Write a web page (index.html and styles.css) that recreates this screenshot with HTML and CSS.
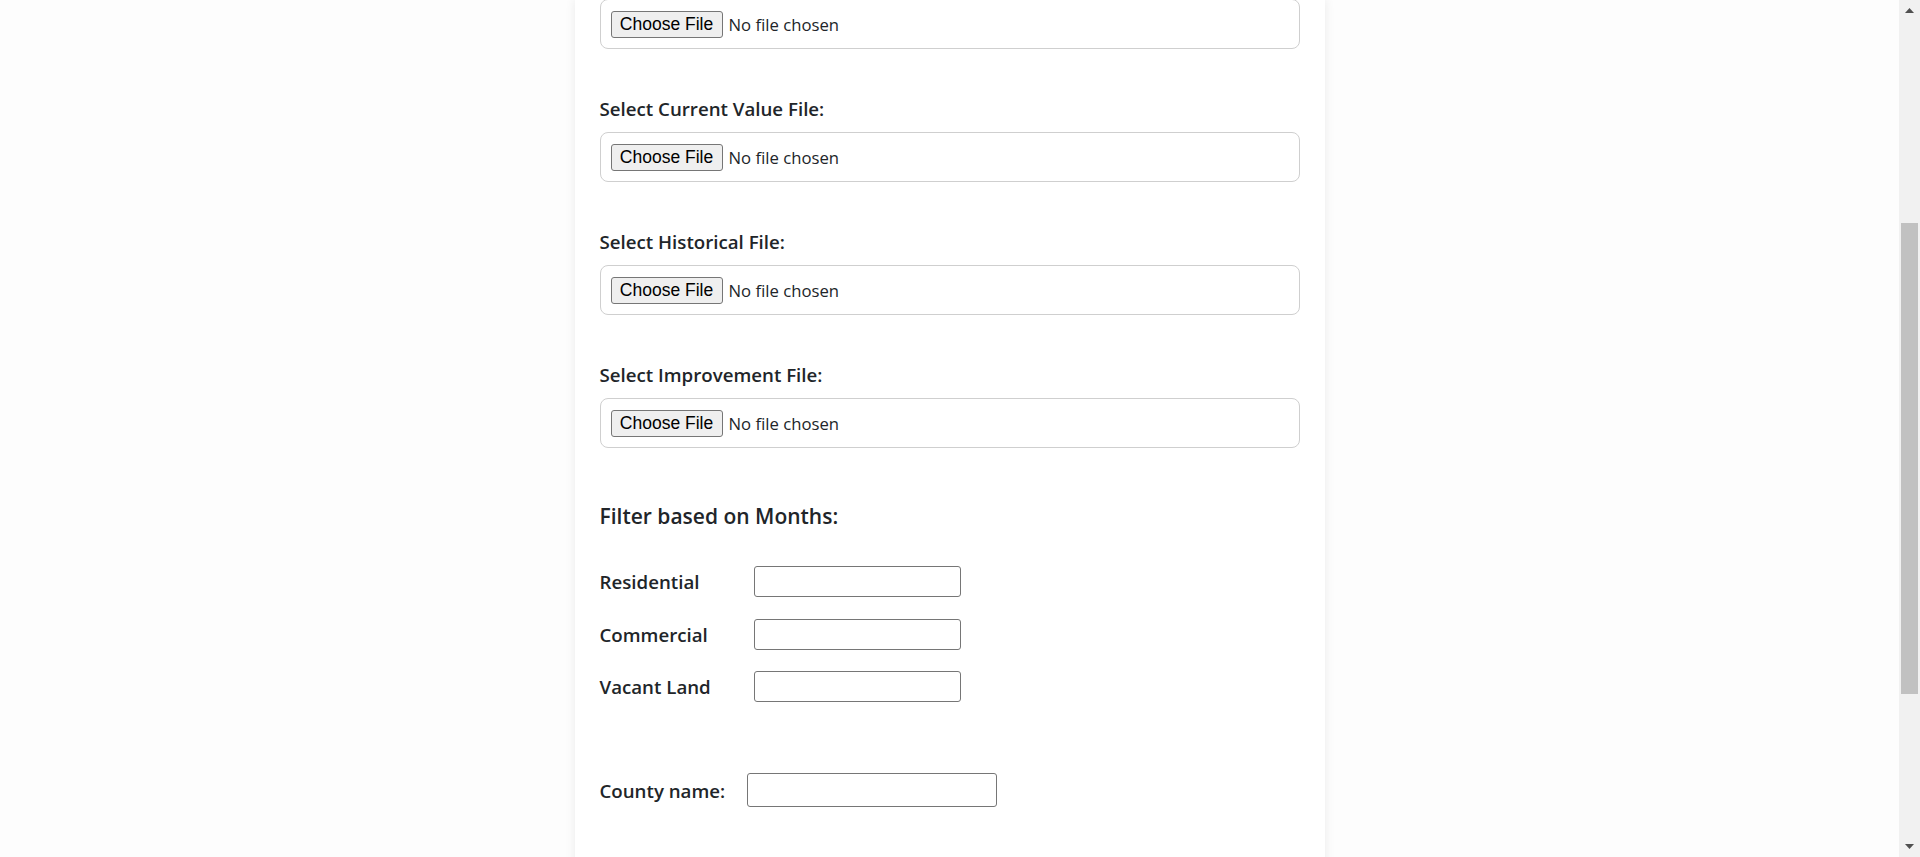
FILE: index.html
```html
<!DOCTYPE html>
<html lang="en">
<head>
<meta charset="utf-8">
<title>Upload Files</title>
<link rel="stylesheet" href="styles.css">
</head>
<body>
  <div class="viewport">
    <main class="card">
      <div class="upload-group first">
        <label class="file-box">
          <input type="file" class="file-native">
          <span class="file-btn">Choose File</span>
          <span class="file-name">No file chosen</span>
        </label>
      </div>

      <div class="upload-group">
        <span class="upload-label">Select Current Value File:</span>
        <label class="file-box">
          <input type="file" class="file-native">
          <span class="file-btn">Choose File</span>
          <span class="file-name">No file chosen</span>
        </label>
      </div>

      <div class="upload-group">
        <span class="upload-label">Select Historical File:</span>
        <label class="file-box">
          <input type="file" class="file-native">
          <span class="file-btn">Choose File</span>
          <span class="file-name">No file chosen</span>
        </label>
      </div>

      <div class="upload-group last">
        <span class="upload-label">Select Improvement File:</span>
        <label class="file-box">
          <input type="file" class="file-native">
          <span class="file-btn">Choose File</span>
          <span class="file-name">No file chosen</span>
        </label>
      </div>

      <h2 class="section-title">Filter based on Months:</h2>

      <div class="month-grid">
        <label class="row-label" for="res">Residential</label>
        <input class="text-input month-input" id="res" type="text">
        <label class="row-label" for="com">Commercial</label>
        <input class="text-input month-input" id="com" type="text">
        <label class="row-label" for="vac">Vacant Land</label>
        <input class="text-input month-input" id="vac" type="text">
      </div>

      <div class="county-row">
        <label class="row-label county-label" for="county">County name:</label>
        <input class="text-input county-input" id="county" type="text">
      </div>
    </main>
  </div>

  <div class="scrollbar" aria-hidden="true">
    <div class="sb-arrow">
      <svg width="9" height="5" viewBox="0 0 9 5"><path d="M4.5 0 L9 5 L0 5 Z" fill="#505050"/></svg>
    </div>
    <div class="sb-track">
      <div class="sb-thumb"></div>
    </div>
    <div class="sb-arrow">
      <svg width="9" height="5" viewBox="0 0 9 5"><path d="M0 0 L9 0 L4.5 5 Z" fill="#505050"/></svg>
    </div>
  </div>
</body>
</html>
```

FILE: styles.css
```css
* {
  box-sizing: border-box;
}

html,
body {
  margin: 0;
  height: 100%;
}

body {
  display: flex;
  height: 857px;
  overflow: hidden;
  background: #fdfdfd;
  color: #212529;
  font-family: "Open Sans", "Noto Sans", sans-serif;
}

.viewport {
  flex: 1;
  min-width: 0;
  overflow: hidden;
}

.card {
  width: 750px;
  height: 900px;
  margin: 0 auto;
  padding: 0 25px;
  background: #ffffff;
  box-shadow: 0 0 10px rgba(0, 0, 0, 0.08);
}

.upload-group {
  margin-bottom: 44px;
}

.upload-group.first {
  margin-top: -1px;
}

.upload-group.last {
  margin-bottom: 0;
}

.upload-label {
  display: block;
  font-size: 18.7px;
  font-weight: 600;
  line-height: 32px;
  margin-bottom: 7px;
}

.file-native {
  display: none;
}

.file-box {
  display: flex;
  align-items: center;
  height: 50px;
  padding: 0 10px;
  border: 1px solid #cfcfcf;
  border-radius: 8px;
  background: #ffffff;
  cursor: pointer;
}

.file-btn {
  display: flex;
  align-items: center;
  justify-content: center;
  width: 112px;
  height: 27px;
  background: #efefef;
  border: 1px solid #767676;
  border-radius: 3px;
  color: #000000;
  font-family: "Liberation Sans", Arial, sans-serif;
  font-size: 17.5px;
}

.file-name {
  margin-left: 6px;
  font-size: 16.7px;
}

.section-title {
  margin: 56px 0 37px;
  font-size: 21px;
  font-weight: 600;
  line-height: 25px;
}

.month-grid {
  display: grid;
  grid-template-columns: 154px 207px;
  row-gap: 21.5px;
  align-items: center;
}

.row-label {
  font-size: 18.7px;
  font-weight: 600;
}

.text-input {
  margin: 0;
  border: 1px solid #767676;
  border-radius: 3px;
  background: #ffffff;
  font-family: inherit;
}

.month-input {
  width: 207px;
  height: 31px;
}

.county-row {
  display: flex;
  align-items: center;
  margin-top: 71px;
}

.county-label {
  width: 147px;
}

.county-input {
  width: 250px;
  height: 34px;
}

.scrollbar {
  display: flex;
  flex-direction: column;
  width: 21px;
  height: 100%;
  background: #f1f1f1;
}

.sb-arrow {
  display: flex;
  align-items: center;
  justify-content: center;
  height: 21px;
}

.sb-track {
  flex: 1;
  padding: 0 2px;
}

.sb-thumb {
  height: 471px;
  margin-top: 202px;
  background: #c1c1c1;
}
```
